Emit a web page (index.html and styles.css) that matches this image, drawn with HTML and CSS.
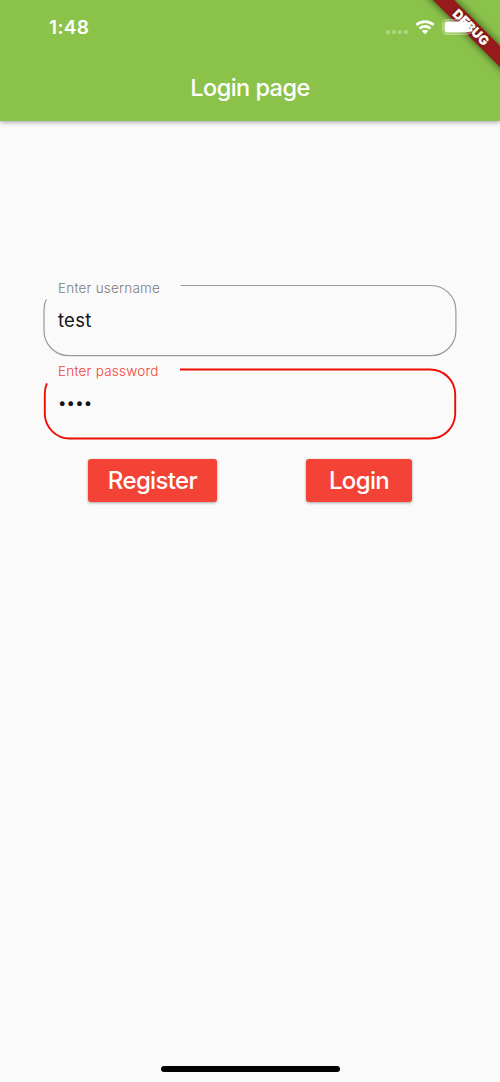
FILE: index.html
```html
<!DOCTYPE html>
<html lang="en">
<head>
<meta charset="utf-8">
<title>Login page</title>
<link rel="stylesheet" href="styles.css">
</head>
<body>
<div class="screen">
  <header class="app-bar">
    <div class="status-bar">
      <span class="time">1:48</span>
      <svg class="status-icons" width="90" height="20" viewBox="0 0 90 20">
        <g fill="#fff" fill-opacity=".3">
          <circle cx="1.900" cy="15.200" r="2.100"/><circle cx="7.900" cy="15.200" r="2.100"/><circle cx="13.800" cy="15.200" r="2.100"/><circle cx="19.800" cy="15.200" r="2.100"/>
        </g>
        <g fill="none" stroke="#fff" stroke-width="2.700">
          <path d="M30.400 7.900a13 13 0 0 1 17.200 0"/>
          <path d="M33.600 11.400a8 8 0 0 1 10.800 0"/>
        </g>
        <path d="M35.800 14a4.600 4.600 0 0 1 6.400 0L39 17.200z" fill="#fff"/>
        <rect x="56.900" y="2.900" width="28.400" height="14.200" rx="4" fill="none" stroke="#fff" stroke-opacity=".5" stroke-width="1.100"/>
        <rect x="58.600" y="4.600" width="25" height="10.800" rx="2.600" fill="#fff"/>
      </svg>
    </div>
    <h1 class="title">Login page</h1>
  </header>
  <main class="form">
    <label class="field">
      <svg class="outline" width="414" height="73" viewBox="0 0 414 73">
        <path d="M137.500 1.500H387.500A25 25 0 0 1 412.900 26.500V47A25 25 0 0 1 387.900 71.700H26A25 25 0 0 1 1 47V26Q1 20 3.300 15.300" fill="none" stroke="#999" stroke-width="1.200"/>
      </svg>
      <span class="caption">Enter username</span>
      <span class="value">test</span>
    </label>
    <label class="field focused">
      <svg class="outline" width="414" height="73" viewBox="0 0 414 73">
        <path d="M137 1.500H387A25 25 0 0 1 412.200 26.500V46.300A25 25 0 0 1 387.200 70.500H26.500A25 25 0 0 1 1.800 46.300V26Q1.800 20 3.900 15.300" fill="none" stroke="#f00d00" stroke-width="1.900"/>
      </svg>
      <span class="caption">Enter password</span>
      <span class="value dots">••••</span>
    </label>
    <div class="actions">
      <button class="button register">Register</button>
      <button class="button login">Login</button>
    </div>
  </main>
  <div class="home-indicator"></div>
  <div class="banner"><span class="banner-text">DEBUG</span></div>
</div>
</body>
</html>
```
FILE: styles.css
```css
* { box-sizing: border-box; }
body { margin: 0; background: #fafafa; font-family: Inter, "Liberation Sans", sans-serif; }
.screen {
  position: relative;
  display: flex;
  flex-direction: column;
  height: 1082px;
  overflow: hidden;
}
.app-bar {
  height: 121px;
  background: #8bc34a;
  color: #fff;
  box-shadow: 0 1px 5px rgba(0, 0, 0, .38);
}
.status-bar {
  display: flex;
  justify-content: space-between;
  height: 57px;
  padding: 17px 24px 0 49px;
}
.status-icons { position: relative; z-index: 2; }
.time { font-size: 19px; line-height: 22px; font-weight: 600; letter-spacing: .35px; }
.title {
  margin: 15px 0 0;
  font-size: 23.500px;
  line-height: 31px;
  font-weight: 500;
  letter-spacing: -.55px;
  text-align: center;
}
.form { flex: 1; padding: 163px 43px 0; }
.field { position: relative; display: flex; flex-direction: column; height: 84px; padding: 0 15px; }
.outline { position: absolute; left: 0; top: 0; }
.caption { height: 25px; margin-top: -4px; font-size: 13.500px; font-weight: 350; line-height: 17px; letter-spacing: .22px; color: #7c7c7c; }
.value { margin-top: 3px; font-size: 18.500px; line-height: 24px; letter-spacing: .25px; color: #151515; }
.focused .caption { margin-top: -5px; color: #f44336; }
.dots { font-size: 15px; letter-spacing: .15px; color: #111; }
.actions { display: flex; gap: 89px; padding: 7px 0 0 45px; }
.button {
  height: 43px;
  padding: 0;
  border: 0;
  border-radius: 3px;
  background: #f44336;
  color: #fff;
  font: 500 24px/44px Inter, "Liberation Sans", sans-serif;
  letter-spacing: -.65px;
  box-shadow: 0 1px 3px rgba(0, 0, 0, .35);
}
.register { width: 129px; }
.login { width: 106px; }
.home-indicator { width: 179px; height: 6px; margin: 0 0 10px 161px; border-radius: 3px; background: #000; }
.banner {
  position: absolute;
  left: 410px;
  top: 20px;
  width: 122px;
  height: 15px;
  background: #971b1b;
  box-shadow: 0 0 9px rgba(0, 0, 0, .65);
  transform: rotate(45deg);
  text-align: center;
  color: #fff;
}
.banner-text { display: block; font-size: 13px; line-height: 15px; font-weight: 900; text-shadow: 0 0 4px rgba(0, 0, 0, .35); }
```
